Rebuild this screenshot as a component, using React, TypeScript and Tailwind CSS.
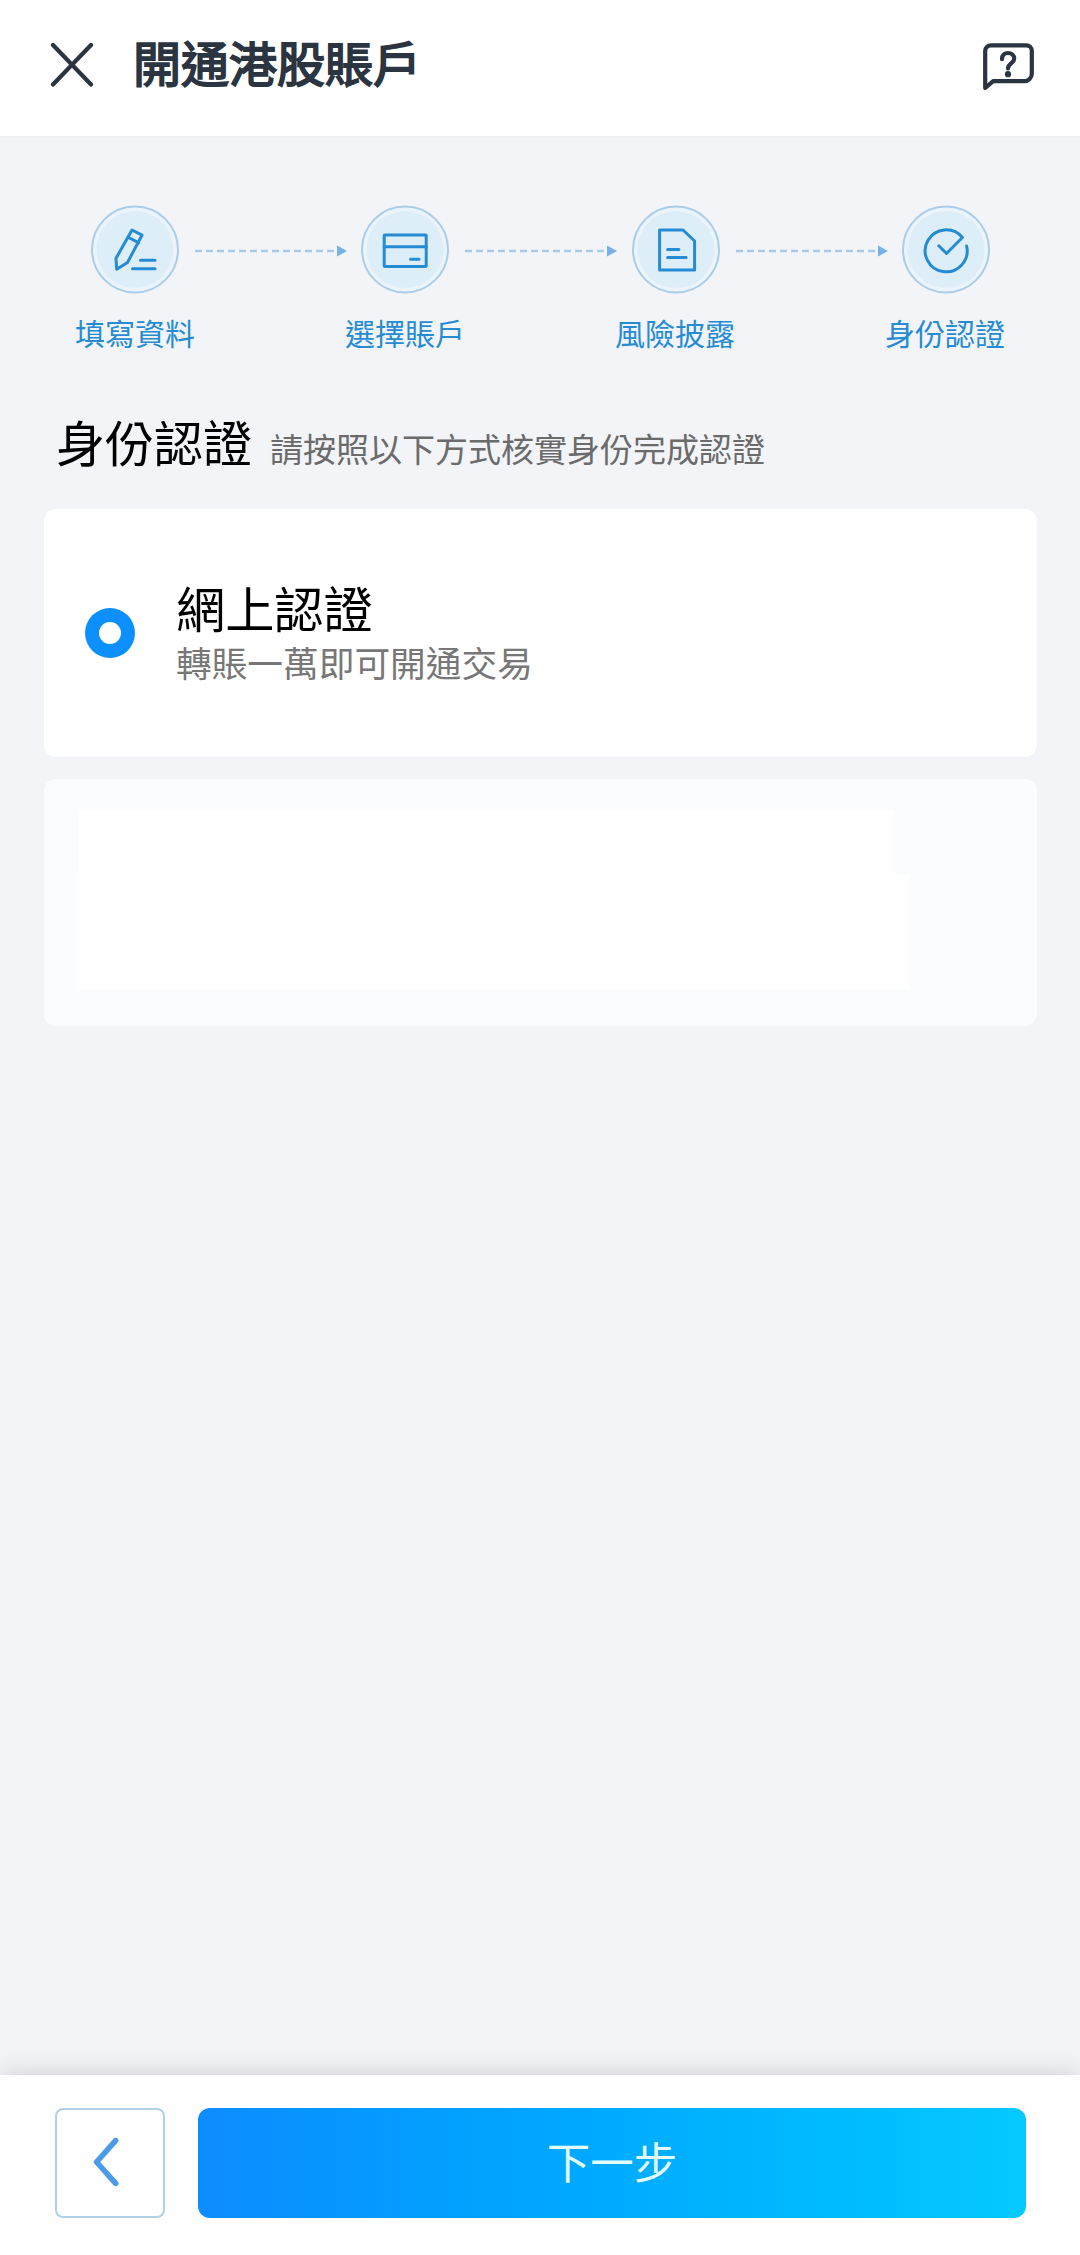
import { Fragment, useState } from 'react';
import type { ReactNode } from 'react';

interface Step {
  label: string;
  icon: ReactNode;
}

const steps: Step[] = [
  {
    label: '填寫資料',
    icon: (
      <>
        <path d="M41 25l10 5.2L36.5 57.5 25.7 64.3 25 53.3z" />
        <path d="M37.5 32.5l10 5.2M49.5 55.3H64M41.5 63.7H64" />
      </>
    ),
  },
  {
    label: '選擇賬戶',
    icon: (
      <>
        <rect x="23.2" y="30" width="42" height="31.5" rx="0.5" />
        <path d="M23.2 41.7h42M49.5 54.2h8.5" />
      </>
    ),
  },
  {
    label: '風險披露',
    icon: (
      <>
        <path d="M27.6 25h23.4l11.6 11v29h-35z" />
        <path d="M35.6 44.4h11.3M35.6 52.5h18.5" />
      </>
    ),
  },
  {
    label: '身份認證',
    icon: (
      <>
        <path d="M64.6 41a21 21 0 1 1-4.2-8.5L44.5 48.5l-7.7-7.7" />
      </>
    ),
  },
];

function StepCircle({ children }: { children: ReactNode }) {
  return (
    <svg className="h-[89px] w-[88px] shrink-0" viewBox="0 0 88 89" fill="none">
      <circle cx="44" cy="44.5" r="43" fill="#ebf3fb" stroke="#aacdea" strokeWidth="2" />
      <circle cx="44" cy="44.5" r="38.5" fill="#deeef8" />
      <g stroke="#258cd4" strokeWidth="3" strokeLinecap="round" strokeLinejoin="round">
        {children}
      </g>
    </svg>
  );
}

function StepArrow() {
  return (
    <svg className="mt-[3px] ml-[2px] h-3 w-[152px] shrink-0" viewBox="0 0 152 12" fill="none">
      <path d="M0 6h139" stroke="#a6cae8" strokeWidth="2.4" strokeDasharray="7 4" />
      <path d="M142 0.4v11.2L152 6z" fill="#76b2e8" />
    </svg>
  );
}

export default function App() {
  const [method, setMethod] = useState('online');

  return (
    <div className="flex h-[2255px] w-[1080px] flex-col overflow-hidden bg-[#f2f4f8] font-['Noto_Sans_CJK_TC',sans-serif]">
      <header className="flex h-[138px] shrink-0 items-start border-b-2 border-[#eef0f4] bg-white pr-[46px] pl-[50px]">
        <button className="mt-[42px]" aria-label="關閉">
          <svg className="h-[45px] w-11" viewBox="0 0 44 45" fill="none" stroke="#2b3441" strokeWidth="4.2" strokeLinecap="round">
            <path d="M3 3l38 39.5M41 3L3 42.5" />
          </svg>
        </button>
        <h1 className="mt-[26px] ml-[39px] flex-1 text-[48px] leading-[70px] text-[#2b3441] [-webkit-text-stroke:1.8px_#2b3441]">
          開通港股賬戶
        </h1>
        <button className="mt-[43px]" aria-label="幫助">
          <svg className="h-12 w-[51px]" viewBox="0 0 51 48" fill="none" stroke="#2b3441" strokeWidth="4.2" strokeLinecap="round" strokeLinejoin="round">
            <path d="M2.2 45V7.8a5.5 5.5 0 0 1 5.5-5.5h35.6a5.5 5.5 0 0 1 5.5 5.5v22.9a7.5 7.5 0 0 1-7.5 7.5H10.2z" />
            <path d="M19 16.2c0-4 2.6-6.2 6-6.2s6.2 2.3 6.2 5.7c0 4.4-6 4.5-6.2 9.8" />
            <circle cx="25" cy="31.2" r="3.1" fill="#2b3441" stroke="none" />
          </svg>
        </button>
      </header>

      <main className="flex-1">
        <div className="flex items-center justify-between pt-[67px] pr-[90px] pl-[91px]">
          {steps.map((step, i) => (
            <Fragment key={step.label}>
              {i > 0 && <StepArrow />}
              <StepCircle>{step.icon}</StepCircle>
            </Fragment>
          ))}
        </div>
        <div className="mt-[16px] grid grid-cols-4 text-center text-[30px] leading-[44px] text-[#258cd4]">
          {steps.map((step) => (
            <span key={step.label}>{step.label}</span>
          ))}
        </div>

        <div className="mt-[52px] flex items-baseline pl-[56px] leading-[70px]">
          <h2 className="text-[49px] text-black">身份認證</h2>
          <p className="ml-[18px] text-[33px] text-[#6b6b6b]">請按照以下方式核實身份完成認證</p>
        </div>

        <div className="mt-[26px] flex flex-col gap-[22px] pr-[43px] pl-11">
          <button
            className="flex h-[248px] items-center rounded-xl bg-white pl-[41px] text-left"
            onClick={() => setMethod('online')}
          >
            <span
              className={`flex size-[50px] shrink-0 items-center justify-center rounded-full ${
                method === 'online' ? 'bg-[#0c90ff]' : 'bg-gray-300'
              }`}
            >
              <span className="size-[22px] rounded-full bg-white" />
            </span>
            <span className="ml-[41px] flex flex-col pb-[2px]">
              <span className="text-[49.2px] leading-[60px] text-black">網上認證</span>
              <span className="text-[35.7px] leading-[50px] text-[#777777]">轉賬一萬即可開通交易</span>
            </span>
          </button>

          <div className="h-[247px] rounded-xl bg-[#fbfcfe] pt-[30px] pl-[33px]">
            <div className="ml-[2px] h-[65px] w-[815px] bg-white" />
            <div className="h-[116px] w-[832px] bg-white" />
          </div>
        </div>
      </main>

      <footer className="flex h-[180px] shrink-0 items-start gap-[33px] bg-[#fefefe] pt-[33px] pr-[54px] pl-[55px] shadow-[0_0_26px_rgba(0,0,0,0.16)]">
        <button
          className="flex h-[110px] w-[110px] shrink-0 items-center justify-center rounded-lg border-2 border-[#b0d1e6]"
          aria-label="上一步"
        >
          <svg className="mb-[2px] -ml-[8px] h-[50px] w-[26px]" viewBox="0 0 26 50" fill="none" stroke="#4a9ce8" strokeWidth="5.6" strokeLinecap="round" strokeLinejoin="round">
            <path d="M22.6 3.6L3.6 25l19 21.4" />
          </svg>
        </button>
        <button className="h-[110px] flex-1 rounded-xl bg-linear-to-r from-[#0d8cff] to-[#05c9ff] pb-1 text-[43.5px] leading-[104px] text-[#e2fcff]">
          下一步
        </button>
      </footer>
    </div>
  );
}
